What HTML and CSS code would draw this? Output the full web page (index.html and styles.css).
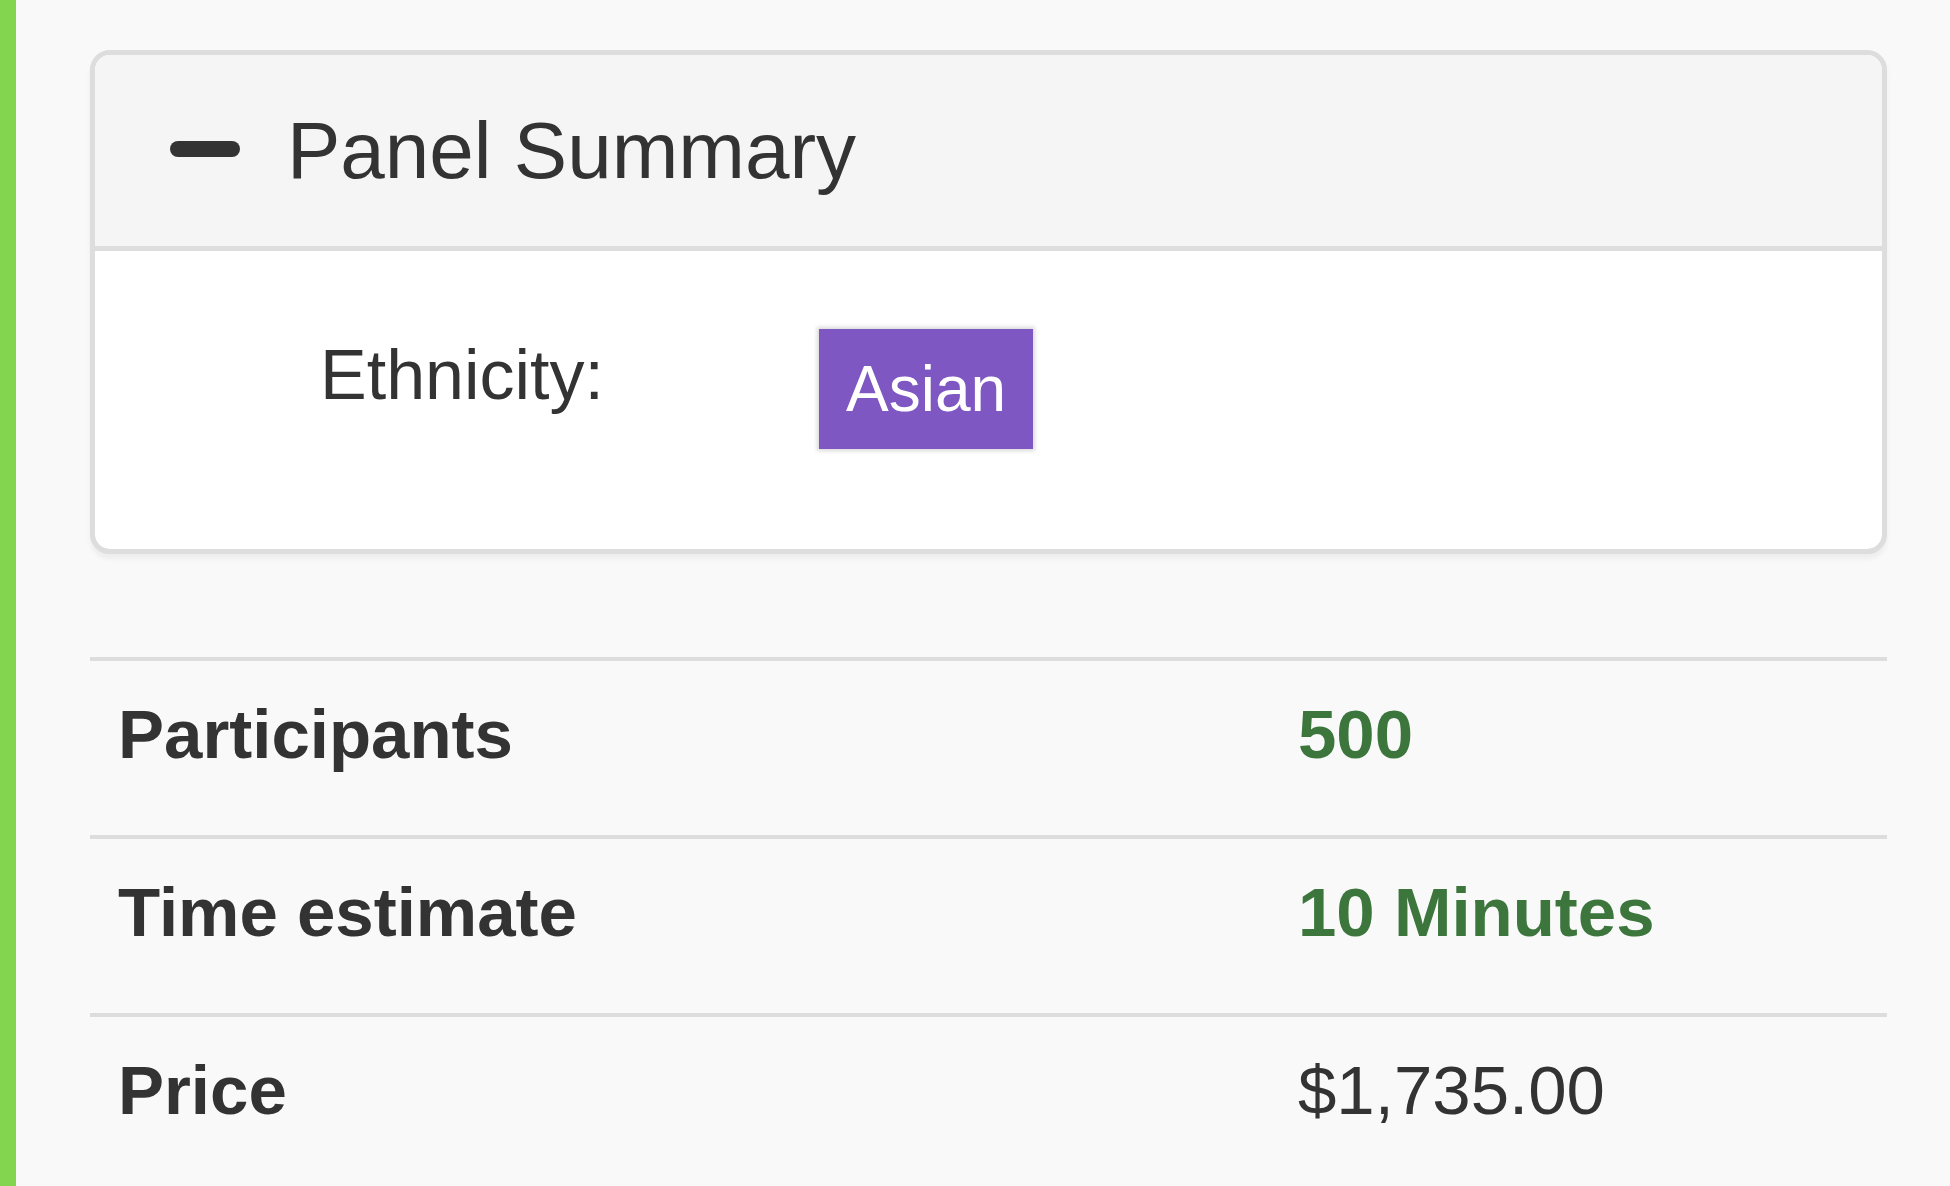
FILE: index.html
```html
<!DOCTYPE html>
<html lang="en">
<head>
    <meta charset="UTF-8">
    <meta name="viewport" content="width=device-width, initial-scale=1.0">
    <title>Panel Summary</title>
    <link rel="stylesheet" href="styles.css">
</head>
<body>
    <div class="side-bar"></div>

    <main class="content">
        <div class="panel">
            <div class="panel-heading">
                <span class="collapse-icon"></span>
                <h4 class="panel-title">Panel Summary</h4>
            </div>
            <div class="panel-body">
                <div class="field-label">Ethnicity:</div>
                <span class="tag">Asian</span>
            </div>
        </div>

        <div class="stats">
            <div class="stat-name">Participants</div>
            <div class="stat-value good">500</div>

            <div class="stat-name">Time estimate</div>
            <div class="stat-value good">10 Minutes</div>

            <div class="stat-name">Price</div>
            <div class="stat-value">$1,735.00</div>
        </div>
    </main>
</body>
</html>
```

FILE: styles.css
```css
html, body {
    height: 100%;
}

body {
    font-family: 'Liberation Sans', Arial, sans-serif;
    color: #333;
    margin: 0;
    padding: 0;
    display: flex;
    background-color: #f9f9f9;
    overflow: hidden;
}

.side-bar {
    width: 16px;
    flex-shrink: 0;
    background-color: #83d54f;
}

.content {
    flex: 1;
    padding: 50px 63px 0 74px;
}

/* summary panel */
.panel {
    background-color: #fff;
    border: 5px solid #ddd;
    border-radius: 20px;
    overflow: hidden;
    box-shadow: 0 5px 5px rgba(0, 0, 0, 0.05);
    margin-bottom: 103px;
}

.panel-heading {
    display: flex;
    align-items: center;
    background-color: #f5f5f5;
    border-bottom: 5px solid #ddd;
    padding: 52px 75px 51px;
}

.collapse-icon {
    width: 70px;
    height: 16px;
    border-radius: 8px;
    background-color: #333;
    margin-right: 47px;
    margin-bottom: 5px;
}

.panel-title {
    margin: 0;
    font-size: 80px;
    font-weight: normal;
    line-height: 1.1;
}

.panel-body {
    display: flex;
    align-items: flex-start;
    padding: 75px 0 100px 225px;
}

.field-label {
    width: 499px;
    font-size: 70px;
    line-height: 98px;
}

.tag {
    margin-top: 3px;
    background-color: #7e57c2;
    color: #fff;
    font-size: 64px;
    line-height: 74px;
    padding: 23px 27px;
    box-shadow: 0 0 4px 2px rgba(0, 0, 0, 0.15);
}

/* stats rows */
.stats {
    display: grid;
    grid-template-columns: 1180px 1fr;
}

.stat-name, .stat-value {
    border-top: 4px solid #ddd;
    padding: 25px 28px 51px;
    font-size: 69px;
    line-height: 98px;
}

.stat-name {
    font-weight: bold;
}

.stat-value.good {
    color: #3c763d;
    font-weight: bold;
}
```
